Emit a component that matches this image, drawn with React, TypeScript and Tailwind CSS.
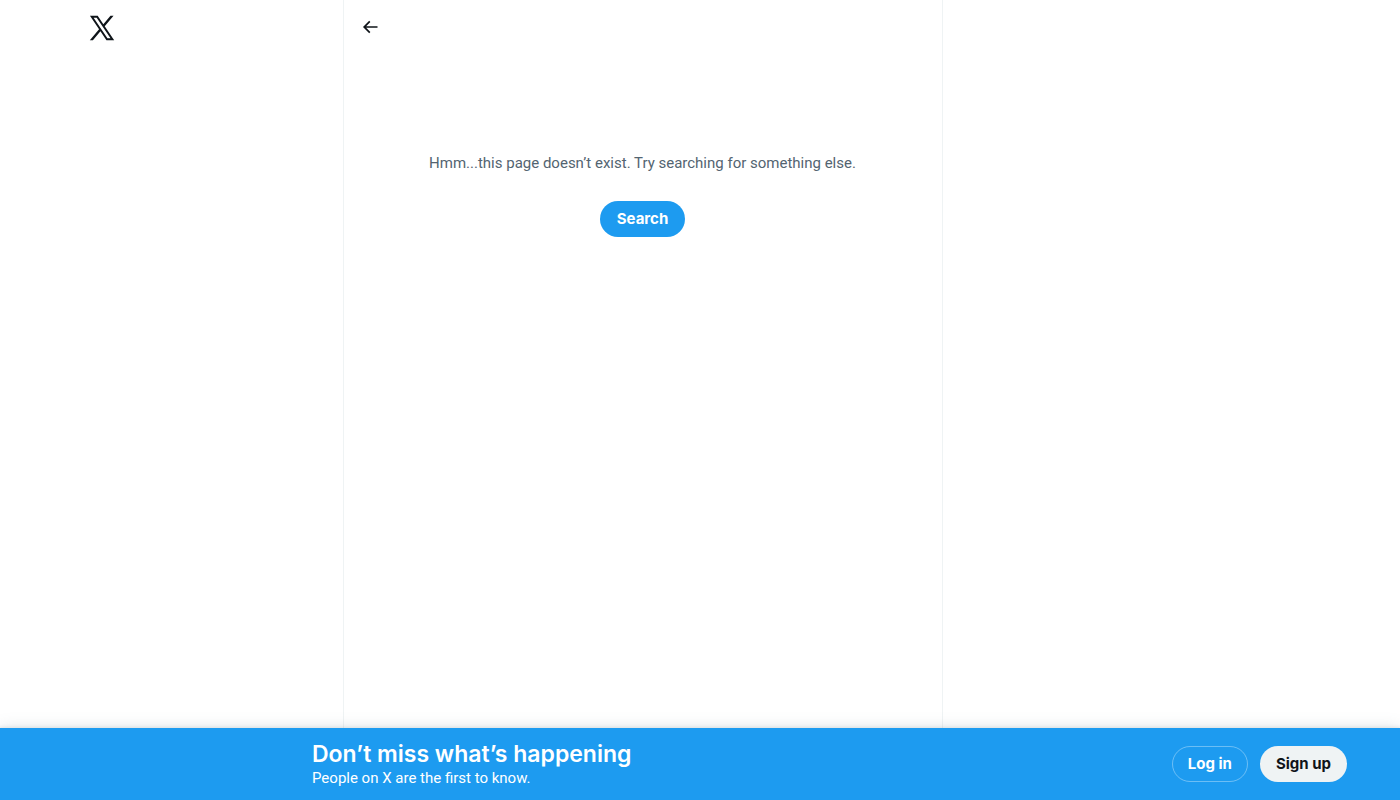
import { useState } from "react";

function XLogo() {
  return (
    <svg viewBox="0 0 24 24" className="size-[30px]" fill="currentColor" aria-hidden="true">
      <path d="M21.742 21.75l-7.563-11.179 7.056-8.321h-2.456l-5.691 6.714-4.54-6.714H2.359l7.29 10.776L2.25 21.75h2.456l6.035-7.118 4.818 7.118h6.191-.008zM7.739 3.818L18.81 20.182h-2.447L5.29 3.818h2.447z" />
    </svg>
  );
}

function BackArrow() {
  return (
    <svg viewBox="0 0 24 24" className="size-5" fill="currentColor" aria-hidden="true">
      <path d="M7.414 13l5.043 5.04-1.414 1.42L3.586 12l7.457-7.46 1.414 1.42L7.414 11H21v2H7.414z" />
    </svg>
  );
}

export default function App() {
  const [showBar, setShowBar] = useState(true);

  return (
    <div className="flex min-h-screen flex-col bg-white font-[Inter,sans-serif] text-[15px] leading-5 text-[#0f1419]">
      <div className="mx-auto flex w-full max-w-[1265px] grow">
        {/* Left column */}
        <header className="w-[275px] shrink-0 px-[19px] py-[13px]">
          <a href="/" aria-label="X" className="inline-block">
            <XLogo />
          </a>
        </header>

        {/* Main column */}
        <main className="w-full max-w-[600px] border-x border-[#eff3f4]">
          <div className="flex h-[53px] items-center px-4">
            <button type="button" aria-label="Back" onClick={() => window.history.back()}>
              <BackArrow />
            </button>
          </div>
          <div className="flex flex-col items-center px-5 pt-[100px] text-center">
            <p className="font-[Roboto,sans-serif] text-[#536471]">
              Hmm...this page doesn’t exist. Try searching for something else.
            </p>
            <a
              href="/explore"
              className="mt-7 flex h-9 items-center rounded-full border border-transparent bg-[#1d9bf0] px-4 font-bold text-white hover:bg-[#1a8cd8]"
            >
              Search
            </a>
          </div>
        </main>
      </div>

      {/* Bottom bar */}
      {showBar && (
        <footer className="sticky bottom-0 bg-[#1d9bf0] text-white shadow-[0_0_15px_rgba(101,119,134,0.2),0_0_3px_1px_rgba(101,119,134,0.15)]">
          <div className="mx-auto flex h-[72px] max-w-[1294px] items-center justify-between pl-[259px]">
            <div>
              <h2 className="text-[23px] leading-7 font-semibold">Don’t miss what’s happening</h2>
              <p className="font-[Roboto,sans-serif]">People on X are the first to know.</p>
            </div>
            <div className="flex gap-3 font-bold">
              <a href="/login" className="flex h-9 items-center rounded-full border border-white/35 px-[15px]">
                Log in
              </a>
              <button
                type="button"
                onClick={() => setShowBar(false)}
                className="h-9 rounded-full border border-transparent bg-[#eff3f4] px-[15px] text-[#0f1419]"
              >
                Sign up
              </button>
            </div>
          </div>
        </footer>
      )}
    </div>
  );
}
